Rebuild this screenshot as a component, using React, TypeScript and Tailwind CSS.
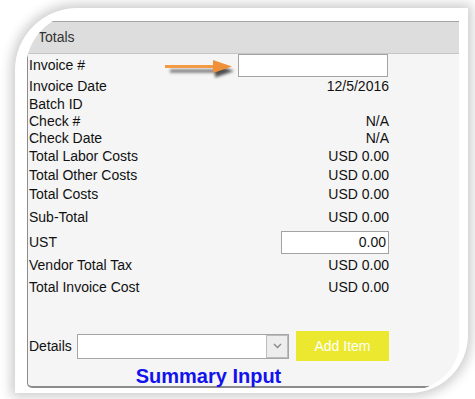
import React from "react";

const rows: { label: string; value?: React.ReactNode; h: number }[] = [
  { label: "Invoice Date", value: "12/5/2016", h: 19 },
  { label: "Batch ID", value: "", h: 17 },
  { label: "Check #", value: "N/A", h: 16 },
  { label: "Check Date", value: "N/A", h: 18 },
  { label: "Total Labor Costs", value: "USD 0.00", h: 19 },
  { label: "Total Other Costs", value: "USD 0.00", h: 19 },
  { label: "Total Costs", value: "USD 0.00", h: 19 },
  { label: "Sub-Total", value: "USD 0.00", h: 27 },
];

export default function App() {
  return (
    <div
      className="relative w-[475px] h-[399px] bg-white overflow-hidden text-[14px] text-[#111]"
      style={{ fontFamily: '"Liberation Sans", Arial, sans-serif' }}
    >
      <div className="pt-[8px] pl-[15px]">
        <div className="w-[453px] h-[385px] bg-white rounded-tl-[62px] rounded-br-[58px] shadow-[0_0_12px_4px_rgba(0,0,0,0.2)] pt-[5px] pl-[11px] pr-[8px] pb-[3px]">
          <div className="w-full h-full overflow-hidden rounded-tl-[56px] rounded-br-[50px] bg-white pt-[8px] pl-[1px]">
            <div className="w-[432px] h-[367px] bg-[#f5f5f5] border-l border-b-2 border-[#8c8c8c] rounded-bl-[5px] flex flex-col">
              {/* header */}
              <div className="h-[33px] shrink-0 bg-[#dddddd] border-t border-t-[#a3a3a3] border-b border-b-[#c6c6c6] flex items-center pl-[10px] text-[#333]">
                Totals
              </div>
              {/* body */}
              <div className="w-[361px] flex flex-col">
                <div className="h-[23px] flex items-center justify-between pl-[1px]">
                  <span>Invoice #</span>
                  <div className="w-[150px] h-[23px] border border-[#a3a3a3] bg-white mr-[1px]" />
                </div>
                {rows.map((r) => (
                  <div
                    key={r.label}
                    className="flex items-center justify-between pl-[1px]"
                    style={{ height: r.h }}
                  >
                    <span>{r.label}</span>
                    <span>{r.value}</span>
                  </div>
                ))}
                <div className="h-[23px] flex items-center justify-between pl-[1px]">
                  <span>UST</span>
                  <div className="w-[108px] h-[23px] border border-[#a3a3a3] bg-white flex items-center justify-end pr-[2px]">
                    0.00
                  </div>
                </div>
                <div className="h-[22px] flex items-center justify-between pl-[1px]">
                  <span>Vendor Total Tax</span>
                  <span>USD 0.00</span>
                </div>
                <div className="h-[22px] flex items-center justify-between pl-[1px]">
                  <span>Total Invoice Cost</span>
                  <span>USD 0.00</span>
                </div>
                <div className="mt-[33px] h-[30px] flex items-center">
                  <span className="w-[49px] pl-[1px]">Details</span>
                  <div className="w-[212px] h-[25px] border border-[#a5a5a5] bg-white flex">
                    <div className="flex-1" />
                    <div className="w-[22px] h-full border border-[#bdbdbd] bg-[#ededed] flex items-center justify-center">
                      <svg width="9" height="6" viewBox="0 0 9 6">
                        <path d="M1 1 L4.5 4.5 L8 1" fill="none" stroke="#8a8a8a" strokeWidth="1.4" />
                      </svg>
                    </div>
                  </div>
                  <div className="ml-[7px] w-[93px] h-[30px] bg-[#ece82f] text-white flex items-center justify-center">
                    Add Item
                  </div>
                </div>
                <div className="mt-[4px] h-[22px] leading-[22px] text-center text-[20px] font-bold text-[#1212ee]">
                  Summary Input
                </div>
              </div>
            </div>
          </div>
        </div>
      </div>
      {/* orange arrow overlay */}
      <svg className="absolute left-[155px] top-[52px]" width="90" height="30" viewBox="155 52 90 30">
        <defs>
          <filter id="sh" x="-20%" y="-50%" width="140%" height="200%">
            <feGaussianBlur stdDeviation="1.5" />
          </filter>
        </defs>
        <g transform="translate(2 4)" filter="url(#sh)" opacity="0.85">
          <line x1="168" y1="67" x2="216" y2="67" stroke="#555" strokeWidth="3" />
          <polygon points="213,60.5 232,67 213,73.5" fill="#333" />
        </g>
        <line x1="165" y1="66.5" x2="216" y2="66.5" stroke="#f29a44" strokeWidth="3" />
        <polygon points="213,60 232,66.5 213,73" fill="#f0913a" />
      </svg>
    </div>
  );
}
